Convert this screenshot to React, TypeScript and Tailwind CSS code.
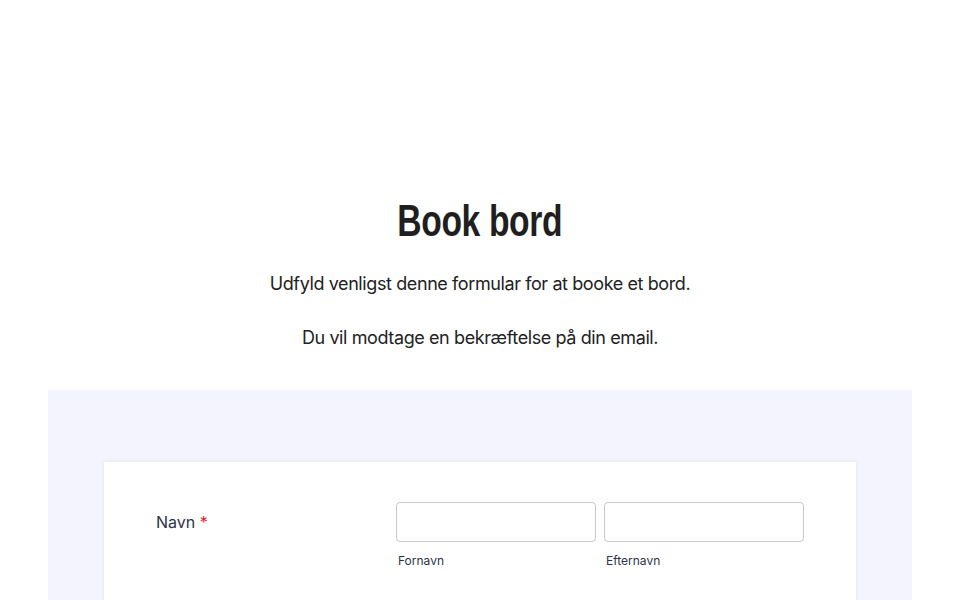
export default function App() {
  return (
    <div className="min-h-[600px] bg-white font-['Inter',sans-serif] text-[#222]">
      {/* Header */}
      <div className="pt-[197px] text-center">
        <h1 className="font-['Liberation_Sans',sans-serif] text-[44px] font-bold leading-[48px] tracking-[-0.5px] text-[#1f1f1f]">
          <span className="inline-block scale-x-[0.765]">Book bord</span>
        </h1>
        <p className="mt-[25px] text-[18px] leading-[28px] tracking-[-0.4px]">
          Udfyld venligst denne formular for at booke et bord.
        </p>
        <p className="mt-[26px] text-[18px] leading-[28px] tracking-[-0.4px]">
          Du vil modtage en bekræftelse på din email.
        </p>
      </div>

      {/* Form area */}
      <div className="mx-12 mt-[38px] bg-[#f3f4fd] px-14 pt-[72px]">
        <div className="bg-white px-[52px] pt-10 pb-10 shadow-[0_0_4px_rgba(0,0,0,0.08)]">
          <div className="flex">
            <div className="w-[240px] pt-[10px] text-[16px] leading-[20px] text-[#2c3345]">
              Navn <span className="text-[#e11d2a]">*</span>
            </div>
            <div className="flex gap-2">
              <div className="flex flex-col">
                <input className="h-10 w-[200px] rounded border border-[#c9c9c9] bg-white outline-none" />
                <span className="mt-[11px] pl-[2px] text-[12px] leading-[16px] text-[#2c3345]">Fornavn</span>
              </div>
              <div className="flex flex-col">
                <input className="h-10 w-[200px] rounded border border-[#c9c9c9] bg-white outline-none" />
                <span className="mt-[11px] pl-[2px] text-[12px] leading-[16px] text-[#2c3345]">Efternavn</span>
              </div>
            </div>
          </div>
        </div>
      </div>
    </div>
  );
}
